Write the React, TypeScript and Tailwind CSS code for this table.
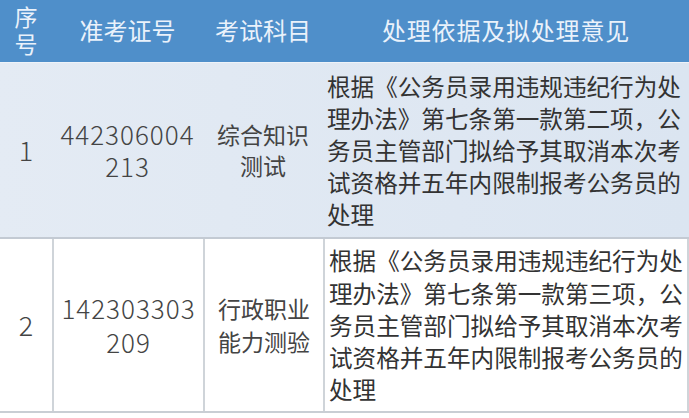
import React from "react";

const rows = [
  {
    no: "1",
    ticket: ["442306004", "213"],
    subject: ["综合知识", "测试"],
    opinion: [
      "根据《公务员录用违规违纪行为处",
      "理办法》第七条第一款第二项，公",
      "务员主管部门拟给予其取消本次考",
      "试资格并五年内限制报考公务员的",
      "处理",
    ],
    shaded: true,
  },
  {
    no: "2",
    ticket: ["142303303", "209"],
    subject: ["行政职业", "能力测验"],
    opinion: [
      "根据《公务员录用违规违纪行为处",
      "理办法》第七条第一款第三项，公",
      "务员主管部门拟给予其取消本次考",
      "试资格并五年内限制报考公务员的",
      "处理",
    ],
    shaded: false,
  },
];

const font = { fontFamily: '"Noto Sans CJK SC", "Noto Sans", sans-serif' };

export default function App() {
  return (
    <div className="w-[689px] h-[418px] bg-white overflow-hidden" style={font}>
      <div className="grid grid-cols-[52px_151px_120px_366px] h-[62px] bg-[#4f8fca] text-[#eaf2fb] text-[24px]">
        <div className="flex flex-col items-center justify-center leading-[27px] -mt-[2px] text-[23px]">
          <span>序</span>
          <span>号</span>
        </div>
        <div className="flex items-center justify-center -mt-[2px]">准考证号</div>
        <div className="flex items-center justify-center -mt-[2px]">考试科目</div>
        <div className="flex items-center justify-center tracking-[0.8px] -mt-[2px]">处理依据及拟处理意见</div>
      </div>
      <div className="h-px bg-[#eef3f9]" />

      {rows.map((r) => (
        <div
          key={r.no}
          className={
            r.shaded
              ? "grid grid-cols-[52px_151px_120px_366px] h-[176px] bg-gradient-to-r from-[#e4ebf4] to-[#dbe5f1] border-b-2 border-[#c3cad3] text-[#333]"
              : "grid grid-cols-[52px_151px_120px_366px] h-[174px] bg-white border-b-2 border-[#c9ced4] text-[#333]"
          }
        >
          <div className="flex items-center justify-center text-[27px] font-light text-[#444]">{r.no}</div>
          <div
            className={
              r.shaded
                ? "flex flex-col items-center justify-center leading-[32px] text-[26px] tracking-[1px] font-light text-[#444]"
                : "flex flex-col items-center justify-center leading-[34px] text-[26px] tracking-[1px] font-light text-[#444] border-l-2 border-[#cfd4d9]"
            }
          >
            {r.ticket.map((t) => (
              <span key={t}>{t}</span>
            ))}
          </div>
          <div
            className={
              r.shaded
                ? "flex flex-col items-center justify-center leading-[31px] text-[23px] text-[#444]"
                : "flex flex-col items-center justify-center leading-[33px] text-[23px] text-[#444] border-l-2 border-[#cfd4d9]"
            }
          >
            {r.subject.map((t) => (
              <span key={t}>{t}</span>
            ))}
          </div>
          <div
            className={
              r.shaded
                ? "flex flex-col justify-center pl-[4px] text-[23.6px] leading-[32px] text-[#333] whitespace-nowrap"
                : "flex flex-col justify-center pl-[4px] text-[23.6px] leading-[32.3px] text-[#333] whitespace-nowrap border-l-2 border-r-2 border-[#cfd4d9]"
            }
          >
            {r.opinion.map((line) => (
              <span key={line}>{line}</span>
            ))}
          </div>
        </div>
      ))}
    </div>
  );
}
